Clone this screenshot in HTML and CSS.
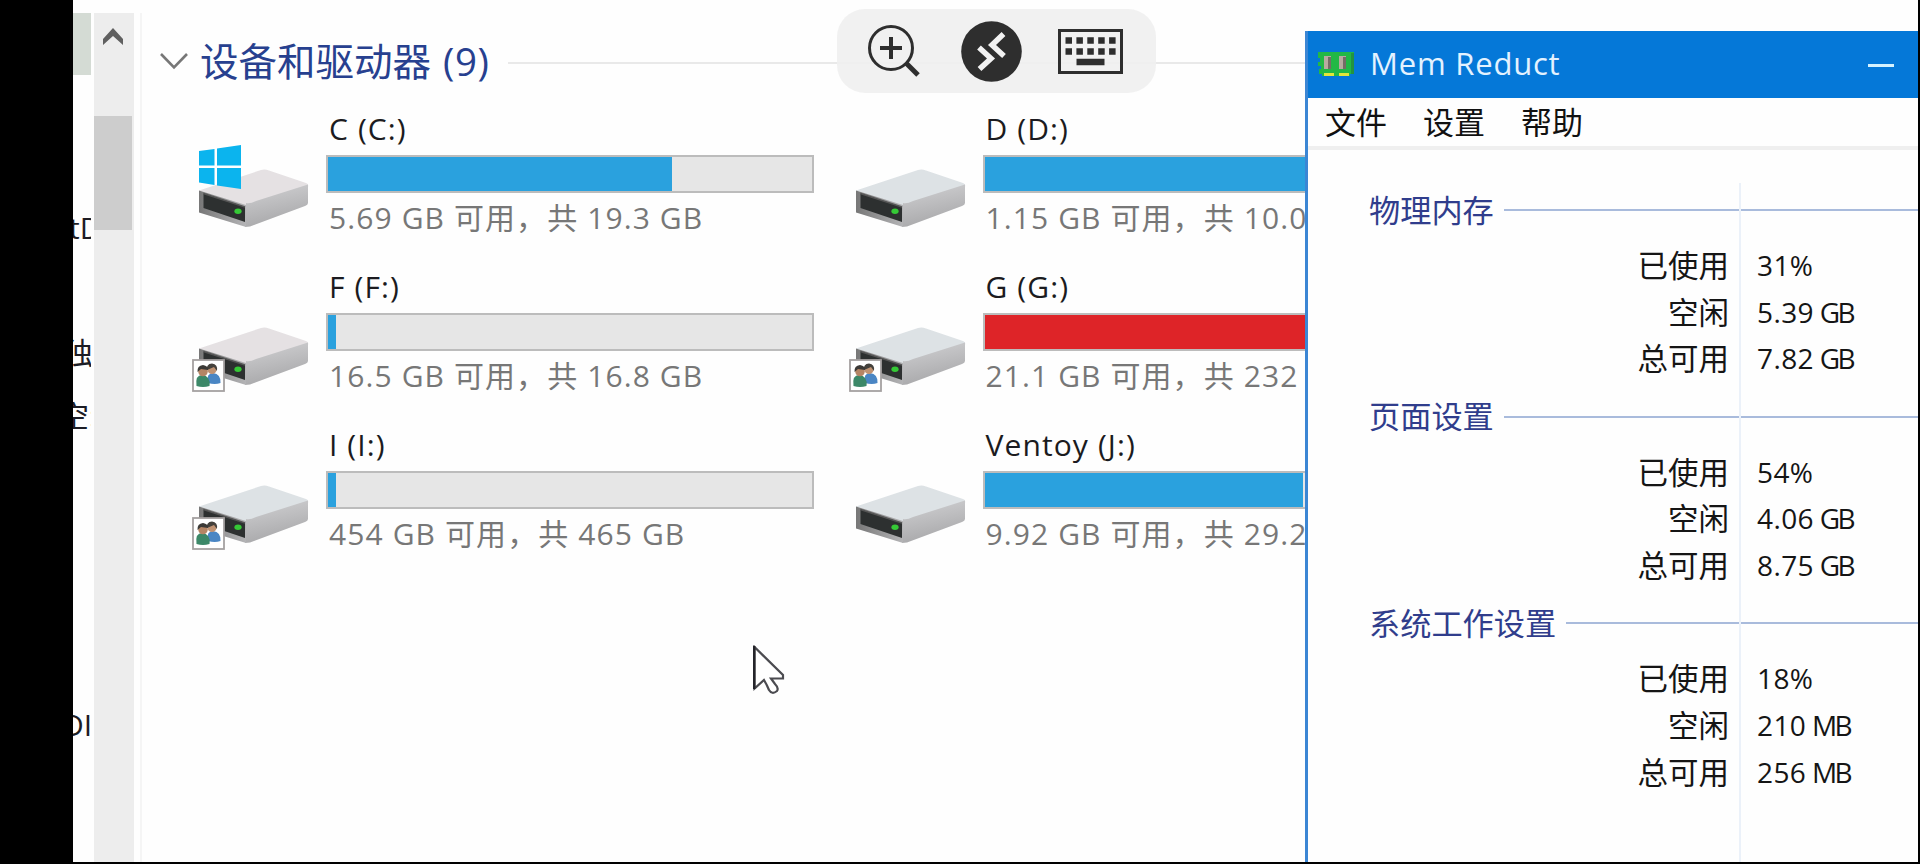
FILE: index.html
```html
<!DOCTYPE html>
<html lang="zh-CN">
<head>
<meta charset="utf-8">
<title>Mem Reduct</title>
<link rel="stylesheet" href="styles.css">
</head>
<body>
<svg class="defs" width="0" height="0">
  <defs>
    <linearGradient id="side" x1="0" y1="0" x2="0.3" y2="1"><stop offset="0" stop-color="#d2d2d4"/><stop offset="1" stop-color="#a9a9ab"/></linearGradient>
    <linearGradient id="face" x1="0" y1="0" x2="1" y2="0"><stop offset="0" stop-color="#777"/><stop offset="1" stop-color="#b4b4b6"/></linearGradient>
    <symbol id="drive" viewBox="0 0 120 110">
      <path d="M9 61.500L71 41Q75 40 79 41.500L116 54Q119 55 118 58L61 76Q56 78 51 75Z" fill="currentColor"/>
      <path d="M56 74Q60 75 66 72L118 55.500V74Q118 76 115 77L60 97.500L55 98Z" fill="url(#side)"/>
      <path d="M9 61.500L56 76V98L9 83.500Z" fill="url(#face)"/>
      <path d="M13.500 64.500L55 78V93L13.500 79Z" fill="#2d3030"/>
      <path d="M13.500 64.500L55 78" stroke="#555" stroke-width="1.500"/>
      <ellipse cx="48" cy="82.300" rx="3.600" ry="2.700" fill="#35c936"/>
    </symbol>
    <symbol id="people" viewBox="0 0 33 33">
      <rect x="1" y="1" width="31" height="31" fill="#fff" stroke="#a5a1a1" stroke-width="1.800"/>
      <path d="M16 24Q14 14 21 14Q29 15 28.500 24Q23 26 16 24Z" fill="#4a86c4"/>
      <path d="M4.500 27Q3 16 10 16Q19 17 17.500 27Q11 29 4.500 27Z" fill="#3c8868"/>
      <circle cx="20" cy="10.500" r="4.600" fill="#c09373"/><path d="M15 11Q14 5 20 4.500Q26 5 25 12L22 8Z" fill="#44413c"/>
      <circle cx="11" cy="12.500" r="4.800" fill="#b58565"/><path d="M5.500 13Q5 6.500 11 6Q16.500 7 16 11L9 10Z" fill="#3b3936"/>
    </symbol>
    <symbol id="winlogo" viewBox="0 0 42 44">
      <path d="M0 6L15.500 4V20.500H0ZM18 3.500L42 0V20.500H18ZM0 23H15.500V40L0 37.500ZM18 23H42V44L18 40.500Z" fill="#0bb4ee"/>
    </symbol>
  </defs>
</svg>
<div class="screen">
  <nav class="tree">
    <div class="tree-sel"></div>
    <div class="tree-item t1">tD</div>
    <div class="tree-item t2">独</div>
    <div class="tree-item t3">空:</div>
    <div class="tree-item t4">DI</div>
  </nav>
  <div class="scrollbar">
    <svg class="scroll-up" viewBox="0 0 20 17"><path d="M0 11L10 0L20 11V17L10 8L0 17Z" fill="#606060"/></svg>
    <div class="thumb"></div>
  </div>
  <main class="files">
    <header class="group">
      <svg class="chev" viewBox="0 0 28 17"><path d="M1 1L14 14.500L27 1" fill="none" stroke="#777" stroke-width="2.600"/></svg>
      <h1 class="group-title">设备和驱动器 <span class="count">(9)</span></h1>
      <div class="group-rule"></div>
    </header>
    <section class="drives">
      <article class="drive">
        <div class="pic warm"><svg class="disk"><use href="#drive"/></svg><svg class="win"><use href="#winlogo"/></svg></div>
        <div class="info"><div class="name">C (C:)</div><div class="bar"><div class="fill" style="width:344px"></div></div><div class="free">5.69 GB 可用，共 19.3 GB</div></div>
      </article>
      <article class="drive">
        <div class="pic"><svg class="disk"><use href="#drive"/></svg></div>
        <div class="info"><div class="name">D (D:)</div><div class="bar"><div class="fill" style="width:430px"></div></div><div class="free">1.15 GB 可用，共 10.0</div></div>
      </article>
      <article class="drive">
        <div class="pic warm"><svg class="disk"><use href="#drive"/></svg><svg class="shared"><use href="#people"/></svg></div>
        <div class="info"><div class="name">F (F:)</div><div class="bar"><div class="fill" style="width:8px"></div></div><div class="free">16.5 GB 可用，共 16.8 GB</div></div>
      </article>
      <article class="drive">
        <div class="pic"><svg class="disk"><use href="#drive"/></svg><svg class="shared"><use href="#people"/></svg></div>
        <div class="info"><div class="name">G (G:)</div><div class="bar"><div class="fill full" style="width:440px"></div></div><div class="free">21.1 GB 可用，共 232</div></div>
      </article>
      <article class="drive">
        <div class="pic"><svg class="disk"><use href="#drive"/></svg><svg class="shared"><use href="#people"/></svg></div>
        <div class="info"><div class="name">I (I:)</div><div class="bar"><div class="fill" style="width:8px"></div></div><div class="free">454 GB 可用，共 465 GB</div></div>
      </article>
      <article class="drive">
        <div class="pic"><svg class="disk"><use href="#drive"/></svg></div>
        <div class="info"><div class="name">Ventoy (J:)</div><div class="bar"><div class="fill" style="width:318px"></div></div><div class="free">9.92 GB 可用，共 29.2</div></div>
      </article>
    </section>
  </main>

  <section class="window">
    <header class="titlebar">
      <svg class="chip" viewBox="0 0 37 25"><path d="M0 0H36V4H34V7H36V11H34V14H36V22H32V24H4V22H1V17H3V14H0V10H2V6H0Z" fill="#22b845"/><path d="M33 1H36V22H33Z" fill="#239340"/><path d="M6 4H13V17H6ZM21 4H28V17H21Z" fill="#b9aaa0"/><path d="M10 5H13V17H10ZM25 5H28V17H25Z" fill="#766b66"/><path d="M6 21H16V24H6ZM21 21H31V24H21Z" fill="#e3e53a"/></svg>
      <h2 class="win-title">Mem Reduct</h2>
      <div class="minimize"></div>
    </header>
    <div class="menu"><span>文件</span><span>设置</span><span>帮助</span></div>
    <div class="stats">
      <div class="column-rule"></div>
      <section class="stat">
        <h3 class="stat-head"><span>物理内存</span></h3>
        <div class="row"><span class="key">已使用</span><span class="val">31%</span></div>
        <div class="row"><span class="key">空闲</span><span class="val">5.39 <span class="unit">GB</span></span></div>
        <div class="row"><span class="key">总可用</span><span class="val">7.82 <span class="unit">GB</span></span></div>
      </section>
      <section class="stat">
        <h3 class="stat-head"><span>页面设置</span></h3>
        <div class="row"><span class="key">已使用</span><span class="val">54%</span></div>
        <div class="row"><span class="key">空闲</span><span class="val">4.06 <span class="unit">GB</span></span></div>
        <div class="row"><span class="key">总可用</span><span class="val">8.75 <span class="unit">GB</span></span></div>
      </section>
      <section class="stat">
        <h3 class="stat-head"><span>系统工作设置</span></h3>
        <div class="row"><span class="key">已使用</span><span class="val">18%</span></div>
        <div class="row"><span class="key">空闲</span><span class="val">210 <span class="unit">MB</span></span></div>
        <div class="row"><span class="key">总可用</span><span class="val">256 <span class="unit">MB</span></span></div>
      </section>
    </div>
  </section>

  <div class="toolbar">
    <svg class="zoomer" viewBox="0 0 52 52"><g fill="none" stroke="#2e2e2e"><circle cx="23" cy="23" r="21.500" stroke-width="3"/><path d="M12 23H34M23 12V34" stroke-width="4"/><path d="M38 38L50 50" stroke-width="5"/></g></svg>
    <svg class="remote" viewBox="0 0 61 61"><circle cx="30.500" cy="30.500" r="30.300" fill="#2e2e2e"/><path d="M18 26.500L30 37.500L18.500 48M42.500 13L31 24L43 35" fill="none" stroke="#f2f2f2" stroke-width="5.500"/></svg>
    <svg class="keys" viewBox="0 0 65 45"><rect x="1.500" y="1.500" width="62" height="42" fill="none" stroke="#2e2e2e" stroke-width="3"/><path d="M7.500 11.500H58M7.500 22.500H58" fill="none" stroke="#2e2e2e" stroke-width="6.500" stroke-dasharray="6.500 4.400"/><path d="M18.500 33H46.500" stroke="#2e2e2e" stroke-width="6.500"/></svg>
  </div>
  <svg class="cursor" viewBox="0 0 32 50"><path d="M1.500 2V43.500L11 35Q14 40 16 45Q19 50 24 46Q26 43 22 39L18 33.500H30V30Z" fill="#fff" stroke="#4b4b50" stroke-width="2.200"/><path d="M1.200 1V44" stroke="#24242a" stroke-width="2.400"/></svg>
</div>
</body>
</html>
```
FILE: styles.css
```css
* { box-sizing: border-box; }
body {
  margin: 0;
  background: #000;
  height: 864px;
  overflow: hidden;
  padding: 0 2px 2px 73px;
  font-family: "Open Sans", "Noto Sans CJK SC", sans-serif;
}
h1, h2, h3 { margin: 0; font-weight: 400; }
svg { display: block; }
.defs { position: absolute; }
.screen {
  position: relative;
  height: 862px;
  display: flex;
  padding-top: 13px;
  overflow: hidden;
  background: #fefefe;
}
.tree {
  width: 18px;
  margin-right: 3px;
  overflow: hidden;
  flex: none;
  font-size: 30px;
  line-height: 40px;
  color: #1c1c24;
}
.tree-sel { height: 62px; background: #d4dbd4; }
.tree-item { height: 40px; white-space: nowrap; }
.t1 { margin-top: 133px; margin-left: -4px; }
.t2 { margin-top: 85px; margin-left: -10px; }
.t3 { margin-top: 23px; margin-left: -14px; }
.t4 { margin-top: 269px; margin-left: -11px; }
.scrollbar { width: 40px; flex: none; background: #ededed; }
.scroll-up { width: 20px; height: 17px; margin: 15px 0 0 9px; }
.thumb { width: 38px; height: 114px; margin-top: 71px; background: #cdcdcd; }
.files {
  flex: 1;
  min-width: 0;
  margin-left: 6px;
  border-left: 2px solid #f5f5f5;
}
.group { display: flex; align-items: center; height: 100px; padding-left: 18px; }
.chev { width: 28px; height: 17px; margin: -3px 12px 0 0; }
.group-title {
  width: 308px;
  margin-top: -5px;
  font-size: 38.500px;
  line-height: 50px;
  white-space: nowrap;
  color: #27408f;
}
.count { margin-left: 2px; letter-spacing: .6px; }
.group-rule { flex: 1; height: 2px; background: #e9e9e9; }
.drives {
  display: grid;
  grid-template-columns: 656.500px 656.500px;
  grid-auto-rows: 157.800px;
  padding-left: 50px;
}
.drive { display: flex; }
.pic { position: relative; width: 134px; flex: none; color: #dde2e5; }
.warm { color: #e5e1e3; }
.disk { width: 120px; height: 110px; margin: 16px 0 0 -2px; }
.win { position: absolute; left: 7px; top: 32px; width: 42px; height: 44px; }
.shared { position: absolute; left: 0; top: 88px; width: 33px; height: 33px; }
.info { width: 488px; white-space: nowrap; }
.name { height: 42px; font-size: 30px; line-height: 32px; padding-left: 3px; color: #1b1b20; letter-spacing: 1.100px; }
.bar { height: 38px; border: 2px solid #bcbcbc; background: #e6e6e6; }
.fill { height: 34px; background: #2aa1de; }
.full { background: #de2428; }
.free { margin-top: 5px; padding-left: 3px; font-size: 30px; line-height: 40px; color: #777; letter-spacing: 1.100px; }

.window {
  position: absolute;
  left: 1232px;
  top: 31px;
  width: 613px;
  height: 831px;
  border-left: 3px solid #3b86d4;
  background: #fefefe;
}
.titlebar { display: flex; align-items: center; height: 67px; background: #0578d8; padding: 0 24px 0 10px; }
.chip { width: 37px; height: 25px; }
.win-title { flex: 1; margin: -3px 0 0 15px; font-size: 31px; line-height: 44px; color: #e3f2ff; letter-spacing: .8px; }
.minimize { width: 26px; height: 3px; background: #d5f2ff; margin-top: 2px; }
.menu { display: flex; gap: 36px; height: 52px; padding-left: 17px; border-bottom: 4px solid #efefef; font-size: 31px; line-height: 48px; color: #111; }
.stats { position: relative; padding-top: 36px; }
.column-rule { position: absolute; left: 431px; top: 33px; bottom: -60px; width: 2px; background: #ebf1f9; }
.stat { height: 206.700px; }
.stat-head { display: flex; align-items: center; padding-left: 61px; height: 48px; font-size: 31.200px; color: #303d8c; }
.stat-head span { margin-top: -4px; }
.stat-head::after { content: ""; flex: 1; height: 2px; margin-left: 10px; background: #a9bbdc; }
.row { display: flex; height: 46.600px; line-height: 46.600px; color: #151515; position: relative; top: 8px; }
.key { width: 421px; text-align: right; font-size: 30.500px; }
.val { margin-left: 28px; font-size: 28px; letter-spacing: .4px; word-spacing: -2px; }
.unit { letter-spacing: -2.500px; }

.toolbar {
  position: absolute;
  left: 764px;
  top: 9px;
  width: 319px;
  height: 84px;
  border-radius: 28px;
  background: rgba(239, 239, 239, .9);
  display: flex;
  align-items: center;
  padding: 0 33px 0 31px;
}
.zoomer { width: 52px; height: 52px; }
.remote { width: 61px; height: 61px; margin-left: 41px; }
.keys { width: 65px; height: 45px; margin-left: auto; }
.cursor { position: absolute; left: 680px; top: 645px; width: 32px; height: 50px; }
```
